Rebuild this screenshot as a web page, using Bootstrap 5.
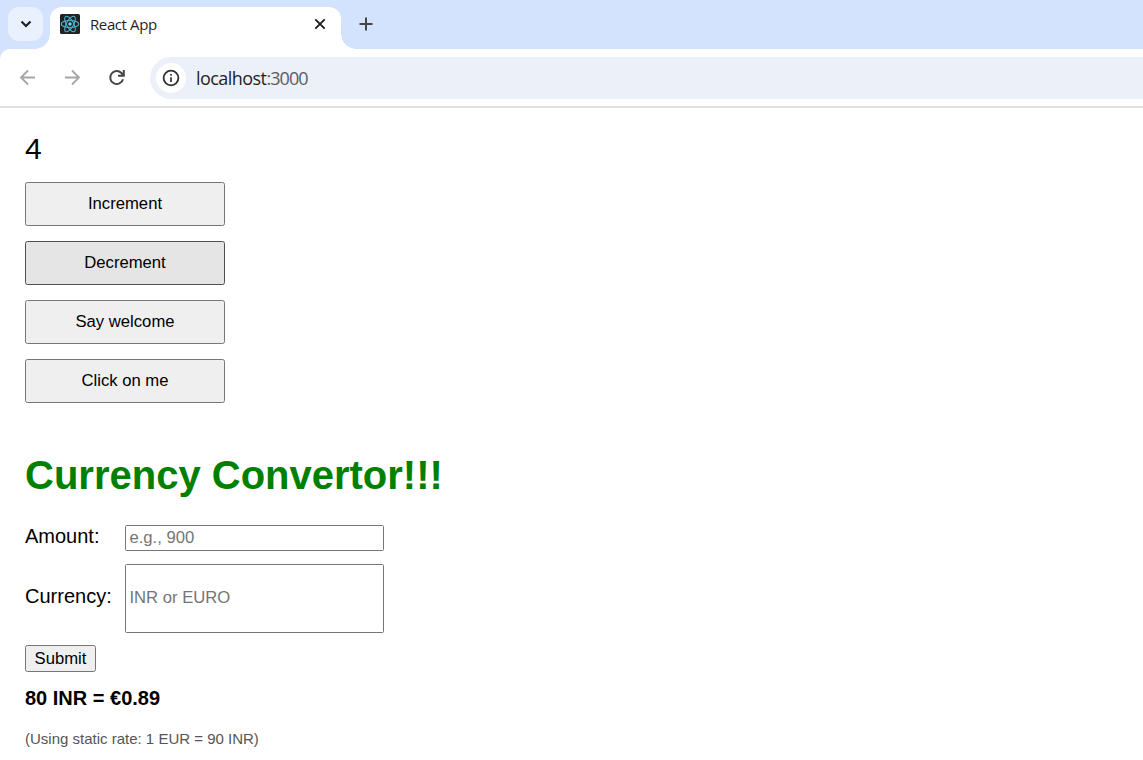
<!DOCTYPE html>
<html lang="en">
<head>
<meta charset="utf-8">
<meta name="viewport" content="width=device-width, initial-scale=1">
<title>React App</title>
<link href="https://cdn.jsdelivr.net/npm/bootstrap@5.3.0/dist/css/bootstrap.min.css" rel="stylesheet">
<style>
body{font-family:"Liberation Sans",Arial,sans-serif;color:#000;background:#fff;height:760px}
svg{display:block;flex:none}
.chrome-ui{font-family:"Open Sans","Noto Sans",sans-serif;color:#1f1f1f}
.tab-strip{height:49px;background:#d3e3fd;padding-left:8px}
.tab-search{width:35px;height:34px;margin-top:7px;border-radius:11px;background:#e9f0fe}
.tab-active{width:291px;height:42px;margin:7px 0 0 7px;padding:0 13px 8px 10px;background:#fff;border-radius:12px 12px 0 0}
.tab-active::before,.tab-active::after{content:"";position:absolute;bottom:0;width:15px;height:15px}
.tab-active::before{left:-15px;background:radial-gradient(circle at 0 0,transparent 14.5px,#fff 15px)}
.tab-active::after{right:-15px;background:radial-gradient(circle at 100% 0,transparent 14.5px,#fff 15px)}
.tab-title{font-size:15px;line-height:20px;margin-left:10px;letter-spacing:-.4px}
.new-tab{margin:16px 0 0 17px}
.toolbar-bg{background:#d3e3fd}
.toolbar{height:59px;background:#fff;border-bottom:2px solid #dfdfdf;border-top-left-radius:10px;padding-left:18px}
.nav-icon{margin-left:24px}
.address{height:42px;background:#ecf0f9;border-radius:21px 0 0 21px;margin-left:24px;padding-left:6px}
.site-info{width:30px;height:30px;background:#fff}
.url-text{font-size:18px;margin-left:10px;letter-spacing:-.55px;line-height:24px}
.url-text span{color:#5a5d62;letter-spacing:-.95px}
.page{padding:23px 25px 0}
.count{font-size:30px;line-height:35px;margin-bottom:16px}
.native{font-size:16.67px;line-height:19px;color:#000;background:#efefef;border:1px solid #767676;border-radius:2.5px;padding:0}
.wide{width:200px;height:44px;padding-bottom:1px}
.wide.hovered{background:#e5e5e5;border-color:#4f4f4f}
.button-stack{gap:15px}
.title{font-size:40px;line-height:46px;color:green;margin:49px 0 27px}
.field-label{width:100px;font-size:20px;line-height:23px;padding-bottom:4px}
.field{width:259px;height:26px;font-size:16.67px;line-height:19px;border:1px solid #767676;border-radius:1.5px;padding:0 3.4px;background:#fff}
.field::placeholder{color:#757575;opacity:1}
.tall{height:69px;padding-bottom:2px}
.field-row + .field-row{margin-top:12px}
.field-row{min-height:27px}
.submit{width:71px;height:27px;margin-top:12px}
.result{font-size:20px;line-height:23px;margin-top:15px}
.note{font-size:15px;line-height:17px;color:#555;margin-top:20px}
</style>
</head>
<body class="overflow-hidden">
<header class="chrome-ui">
  <div class="tab-strip d-flex">
    <div class="tab-search d-flex align-items-center justify-content-center">
      <svg width="12" height="8" viewBox="0 0 12 8"><path d="M1.500 1.500 6 6l4.500-4.500" fill="none" stroke="#1f1f1f" stroke-width="2.200"/></svg>
    </div>
    <div class="tab-active position-relative d-flex align-items-center">
      <svg width="20" height="20" viewBox="0 0 20 20"><rect width="20" height="20" rx="1.500" fill="#222"/><g fill="none" stroke="#4fb5d0" stroke-width="1.050"><ellipse cx="10" cy="10" rx="8.800" ry="3.500"/><ellipse cx="10" cy="10" rx="8.800" ry="3.500" transform="rotate(60 10 10)"/><ellipse cx="10" cy="10" rx="8.800" ry="3.500" transform="rotate(120 10 10)"/></g><circle cx="10" cy="10" r="1.700" fill="#61dafb"/></svg>
      <span class="tab-title">React App</span>
      <svg class="ms-auto" width="16" height="16" viewBox="0 0 16 16"><path d="m3.300 3.300 9.400 9.400m0-9.400-9.400 9.400" stroke="#1f1f1f" stroke-width="1.900"/></svg>
    </div>
    <svg class="new-tab" width="16" height="16" viewBox="0 0 16 16"><path d="M8 1.500v13M1.500 8h13" stroke="#444746" stroke-width="2"/></svg>
  </div>
  <div class="toolbar-bg">
    <div class="toolbar d-flex align-items-center">
      <svg width="20" height="20" viewBox="0 0 20 20"><path d="M17 9.500H3.500M10 2.500l-7 7 7 7" fill="none" stroke="#a5a5a5" stroke-width="1.800"/></svg>
      <svg class="nav-icon" width="20" height="20" viewBox="0 0 20 20"><path d="M3 9.500h13.500M10 2.500l7 7-7 7" fill="none" stroke="#a5a5a5" stroke-width="1.800"/></svg>
      <svg class="nav-icon" width="20" height="20" viewBox="0 0 20 20"><path d="M17 11.200A6.500 6.500 0 1 1 15.400 5l2.300 2.500M17.800 2V7.800H12" fill="none" stroke="#444746" stroke-width="2"/></svg>
      <div class="address d-flex align-items-center flex-grow-1">
        <div class="site-info rounded-circle d-flex align-items-center justify-content-center">
          <svg width="18" height="18" viewBox="0 0 18 18"><circle cx="9" cy="9" r="7.400" fill="none" stroke="#303236" stroke-width="1.800"/><path d="M9 8.200V13M9 5v1.700" stroke="#303236" stroke-width="1.700"/></svg>
        </div>
        <div class="url-text">localhost<span>:3000</span></div>
      </div>
    </div>
  </div>
</header>
<main class="page">
  <div class="count">4</div>
  <div class="button-stack d-flex flex-column align-items-start">
    <button class="native wide" type="button">Increment</button>
    <button class="native wide hovered" type="button">Decrement</button>
    <button class="native wide" type="button">Say welcome</button>
    <button class="native wide" type="button">Click on me</button>
  </div>
  <h1 class="title fw-bold">Currency Convertor!!!</h1>
  <form>
    <div class="field-row d-flex align-items-start">
      <label class="field-label" for="amount">Amount:</label>
      <input class="field" id="amount" type="text" placeholder="e.g., 900">
    </div>
    <div class="field-row d-flex align-items-center">
      <label class="field-label" for="currency">Currency:</label>
      <input class="field tall" id="currency" type="text" placeholder="INR or EURO">
    </div>
    <button class="native submit d-block" type="button">Submit</button>
  </form>
  <div class="result fw-bold">80 INR = €0.89</div>
  <div class="note">(Using static rate: 1 EUR = 90 INR)</div>
</main>
<script src="https://cdn.jsdelivr.net/npm/bootstrap@5.3.0/dist/js/bootstrap.bundle.min.js"></script>
</body>
</html>
